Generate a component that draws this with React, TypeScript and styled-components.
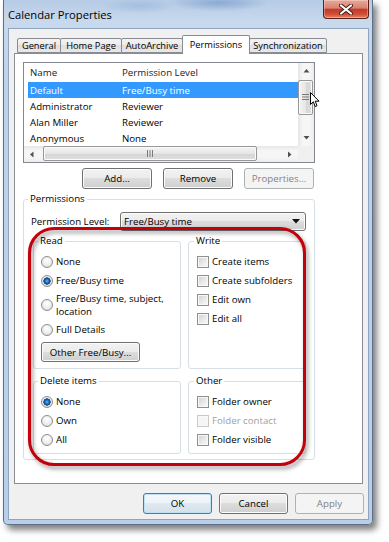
import React from 'react';
import styled, { createGlobalStyle } from 'styled-components';

const GlobalStyle = createGlobalStyle`
  html, body {
    margin: 0;
    background: #fff;
  }
  body {
    font-family: 'Open Sans', 'Noto Sans', sans-serif;
    font-size: 9.7px;
    color: #000;
  }
  * {
    box-sizing: border-box;
  }
`;

const Page = styled.div`
  height: 542px;
  padding-left: 3px;
`;

const Window = styled.div`
  width: 370px;
  height: 525px;
  display: flex;
  flex-direction: column;
  padding: 0 3px 4px 4px;
  border: 1px solid #5d7089;
  border-top: none;
  border-radius: 0 0 5px 5px;
  background:
    radial-gradient(ellipse 70px 12px at 215px 3px, rgba(92, 134, 192, 0.5), transparent 70%),
    radial-gradient(ellipse 55px 10px at 135px 6px, rgba(120, 160, 212, 0.35), transparent 70%),
    linear-gradient(180deg, #b6cbe5 0px, #c8d9ed 22px, #bed2ea 80px, #b9cee8 100%);
  box-shadow: 4px 5px 6px rgba(0, 0, 0, 0.5);
`;

const TitleBar = styled.div`
  height: 28px;
  flex: none;
  display: flex;
  justify-content: space-between;
  align-items: flex-start;
`;

const Title = styled.div`
  margin-top: 7px;
  font-size: 11.2px;
  line-height: 16px;
  color: #000;
`;

const CloseButton = styled.div`
  width: 46px;
  height: 19px;
  display: flex;
  align-items: center;
  justify-content: center;
  border: 1px solid #5f1f17;
  border-top: none;
  border-radius: 0 0 4px 4px;
  background: linear-gradient(#e9a899 0%, #d98270 45%, #c13a2a 52%, #cf4d36 78%, #e2866a 100%);
  box-shadow: inset 0 0 0 1px rgba(255, 255, 255, 0.3);
`;

const Client = styled.div`
  flex: 1;
  display: flex;
  flex-direction: column;
  padding-top: 6px;
  background: #f0f0f0;
  border: 1px solid #8fa4bd;
`;

const TabStrip = styled.div`
  height: 19px;
  margin: 0 0 -1px 8px;
  display: flex;
  align-items: flex-end;
  position: relative;
  z-index: 1;
`;

const Tab = styled.div<{ $w: number; $active?: boolean }>`
  width: ${p => p.$w}px;
  height: ${p => (p.$active ? 19 : 15)}px;
  margin-bottom: ${p => (p.$active ? 0 : 1)}px;
  margin-right: -1px;
  display: flex;
  align-items: center;
  justify-content: center;
  padding-bottom: ${p => (p.$active ? 2 : 0)}px;
  border: 1px solid #898c95;
  border-bottom: ${p => (p.$active ? 'none' : '1px solid #898c95')};
  border-radius: 2px 2px 0 0;
  background: ${p => (p.$active ? '#fff' : 'linear-gradient(#f3f3f3, #ebebeb 50%, #dfdfdf 50%, #e9e9e9)')};
  font-size: 9.3px;
  line-height: 13px;
  white-space: nowrap;
  position: relative;
  z-index: ${p => (p.$active ? 2 : 1)};
`;

const Panel = styled.div`
  margin-left: 5px;
  width: 349px;
  height: 431px;
  padding: 8px 0 0 8px;
  background: #fff;
  border: 1px solid #898c95;
  position: relative;
`;

const ListView = styled.div`
  width: 292px;
  height: 101px;
  display: grid;
  grid-template-columns: 1fr 16px;
  grid-template-rows: 1fr 16px;
  border: 1px solid #828790;
`;

const ListBody = styled.div`
  display: flex;
  flex-direction: column;
`;

const ListHeader = styled.div`
  height: 19px;
  padding-left: 6px;
  display: grid;
  grid-template-columns: 92px 1fr;
  align-items: center;
  color: #1b1b1b;
`;

const ListRow = styled.div<{ $selected?: boolean }>`
  height: 16px;
  margin-left: 4px;
  padding-left: 2px;
  display: grid;
  grid-template-columns: 92px 1fr;
  align-items: center;
  background: ${p => (p.$selected ? '#3399ff' : 'transparent')};
  color: ${p => (p.$selected ? '#fff' : '#000')};
`;

const VScroll = styled.div`
  display: flex;
  flex-direction: column;
  background: linear-gradient(90deg, #e6e6e6, #f6f6f6 30%, #f6f6f6 70%, #ececec);
`;

const HScroll = styled.div`
  display: flex;
  background: linear-gradient(180deg, #e6e6e6, #f6f6f6 30%, #f6f6f6 70%, #ececec);
`;

const ScrollArrow = styled.div`
  flex: none;
  width: 16px;
  height: 16px;
  display: flex;
  align-items: center;
  justify-content: center;
`;

const ScrollGap = styled.div`
  flex: 1;
`;

const Thumb = styled.div<{ $horizontal?: boolean }>`
  flex: none;
  width: ${p => (p.$horizontal ? '214px' : '15px')};
  height: ${p => (p.$horizontal ? '15px' : '35px')};
  margin: ${p => (p.$horizontal ? '0 0 0 3px' : '1px 0 0 0')};
  display: flex;
  align-items: center;
  justify-content: center;
  border: 1px solid #979797;
  border-radius: 2px;
  background: ${p =>
    p.$horizontal
      ? 'linear-gradient(180deg, #f4f4f4, #e6e6e6 50%, #d6d6d6 51%, #dedede)'
      : 'linear-gradient(90deg, #f4f4f4, #e6e6e6 50%, #d6d6d6 51%, #dedede)'};
  box-shadow: inset 0 0 0 1px #fbfbfb;
`;

const Corner = styled.div`
  background: #f0f0f0;
`;

const ActionRow = styled.div`
  width: 292px;
  margin-top: 5px;
  padding-right: 1px;
  display: flex;
  justify-content: flex-end;
  gap: 11px;
`;

const Button = styled.button<{ $w: number; $h?: number; $primary?: boolean }>`
  width: ${p => p.$w}px;
  height: ${p => p.$h || 21}px;
  flex: none;
  padding: 0;
  font: inherit;
  color: #000;
  border: 1px solid ${p => (p.$primary ? '#3c7fb1' : '#707070')};
  border-radius: 3px;
  background: ${p =>
    p.$primary
      ? 'linear-gradient(#f4f8fb 0%, #edf3f8 49%, #e0e9f1 50%, #d5e0ea 100%)'
      : 'linear-gradient(#f2f2f2 0%, #ebebeb 49%, #dddddd 50%, #cfcfcf 100%)'};
  box-shadow: inset 0 0 0 1px ${p => (p.$primary ? '#bfe1f7' : '#fcfcfc')};

  &:disabled {
    border-color: #adb2b5;
    background: #f4f4f4;
    color: #838383;
    box-shadow: none;
  }
`;

const GroupBox = styled.fieldset<{ $pad: string }>`
  margin: 0;
  min-width: 0;
  padding: ${p => p.$pad};
  display: flex;
  flex-direction: column;
  border: 1px solid #d5dfe5;
  border-radius: 3px;
`;

const GroupTitle = styled.legend<{ $shift: number }>`
  margin-left: ${p => p.$shift}px;
  padding: 0 2px;
  line-height: 14px;
`;

const PermissionsBox = styled(GroupBox)`
  width: 292px;
  margin-top: 3px;
`;

const LevelRow = styled.div`
  margin-top: 6px;
  display: flex;
  align-items: center;
  justify-content: space-between;
`;

const LevelLabel = styled.span`
  margin-left: -2px;
`;

const ComboBox = styled.div`
  width: 186px;
  height: 19px;
  padding: 0 5px 0 3px;
  display: flex;
  align-items: center;
  justify-content: space-between;
  border: 1px solid #707070;
  border-radius: 3px;
  background: linear-gradient(#f2f2f2 0%, #ebebeb 49%, #dddddd 50%, #cfcfcf 100%);
  box-shadow: inset 0 0 0 1px #fcfcfc;
`;

const GroupGrid = styled.div`
  margin-top: 3px;
  display: grid;
  grid-template-columns: 148px 1fr;
  grid-template-rows: 135px 80px;
  column-gap: 7px;
  row-gap: 5px;
`;

const Options = styled.div`
  padding-top: 7px;
  display: flex;
  flex-direction: column;
  align-items: flex-start;
  gap: 6px;
`;

const Option = styled.label<{ $disabled?: boolean }>`
  display: flex;
  align-items: center;
  gap: 3px;
  line-height: 13px;
  color: ${p => (p.$disabled ? '#a0a0a0' : '#000')};
`;

const TwoLines = styled.span`
  margin: -1px 0;
  line-height: 13px;
`;

const Radio = styled.span<{ $on?: boolean }>`
  flex: none;
  width: 12px;
  height: 12px;
  border-radius: 50%;
  border: 1px solid #8d8d8d;
  background: ${p =>
    p.$on
      ? 'radial-gradient(circle at 50% 50%, #6ab6f0 0, #2270c0 1.8px, #0b3f82 3.4px, transparent 3.9px), radial-gradient(circle at 50% 35%, #fff 0, #ebebeb 55%, #d0d0d0 100%)'
      : 'radial-gradient(circle at 50% 35%, #fff 0, #ededed 55%, #d2d2d2 100%)'};
`;

const Check = styled.span<{ $disabled?: boolean }>`
  flex: none;
  width: 12px;
  height: 12px;
  border: 1px solid ${p => (p.$disabled ? '#c9c9c9' : '#8e8f8f')};
  background: ${p =>
    p.$disabled ? '#f5f5f5' : 'linear-gradient(135deg, #cdd0d4 0%, #e8eaec 55%, #fbfbfb 100%)'};
  box-shadow: inset 0 0 0 1px #f8f8f8;
`;

const Highlight = styled.div`
  position: absolute;
  left: 13px;
  top: 173px;
  width: 278px;
  height: 239px;
  border: 3px solid #c4000c;
  border-radius: 26px;
  filter: drop-shadow(2px 3px 2px rgba(0, 0, 0, 0.4));
  pointer-events: none;
`;

const Pointer = styled.svg`
  position: absolute;
  left: 295px;
  top: 38px;
`;

const ButtonBar = styled.div`
  margin-top: 9px;
  padding-right: 4px;
  display: flex;
  justify-content: flex-end;
  gap: 7px;
`;

const Arrow = ({ dir }: { dir: 'up' | 'down' | 'left' | 'right' }) => {
  const paths = {
    up: 'M0.5 4.5 L3.5 1 L6.5 4.5 Z',
    down: 'M0.5 1 L3.5 4.5 L6.5 1 Z',
    left: 'M4.5 0.5 L1 3.5 L4.5 6.5 Z',
    right: 'M1 0.5 L4.5 3.5 L1 6.5 Z',
  };
  const horizontal = dir === 'left' || dir === 'right';
  return (
    <svg width={horizontal ? 6 : 7} height={horizontal ? 7 : 6} viewBox={horizontal ? '0 0 6 7' : '0 0 7 6'}>
      <path d={paths[dir]} fill="#505050" />
    </svg>
  );
};

const Grip = ({ horizontal }: { horizontal?: boolean }) =>
  horizontal ? (
    <svg width="7" height="7" viewBox="0 0 7 7">
      {[0.5, 3, 5.5].map(x => (
        <line key={x} x1={x} y1="0" x2={x} y2="7" stroke="#7a7a7a" strokeWidth="1" />
      ))}
    </svg>
  ) : (
    <svg width="7" height="7" viewBox="0 0 7 7">
      {[0.5, 3, 5.5].map(y => (
        <line key={y} x1="0" y1={y} x2="7" y2={y} stroke="#7a7a7a" strokeWidth="1" />
      ))}
    </svg>
  );

const tabs = [
  { label: 'General', w: 44 },
  { label: 'Home Page', w: 62 },
  { label: 'AutoArchive', w: 62 },
  { label: 'Permissions', w: 68, active: true },
  { label: 'Synchronization', w: 78 },
];

const people = [
  { name: 'Default', level: 'Free/Busy time', selected: true },
  { name: 'Administrator', level: 'Reviewer' },
  { name: 'Alan Miller', level: 'Reviewer' },
  { name: 'Anonymous', level: 'None' },
];

const writeOptions = ['Create items', 'Create subfolders', 'Edit own', 'Edit all'];

const deleteOptions = [
  { label: 'None', on: true },
  { label: 'Own' },
  { label: 'All' },
];

const otherOptions = [
  { label: 'Folder owner' },
  { label: 'Folder contact', disabled: true },
  { label: 'Folder visible' },
];

function App() {
  return (
    <Page>
      <GlobalStyle />
      <Window>
        <TitleBar>
          <Title>Calendar Properties</Title>
          <CloseButton>
            <svg width="14" height="11" viewBox="0 0 14 11">
              <path d="M2 1.5 L12 9.5 M12 1.5 L2 9.5" stroke="#4a1a14" strokeWidth="4" strokeLinecap="round" />
              <path d="M2 1.5 L12 9.5 M12 1.5 L2 9.5" stroke="#fff" strokeWidth="2.2" strokeLinecap="round" />
            </svg>
          </CloseButton>
        </TitleBar>
        <Client>
          <TabStrip>
            {tabs.map(t => (
              <Tab key={t.label} $w={t.w} $active={t.active}>
                {t.label}
              </Tab>
            ))}
          </TabStrip>
          <Panel>
            <ListView>
              <ListBody>
                <ListHeader>
                  <span>Name</span>
                  <span>Permission Level</span>
                </ListHeader>
                {people.map(p => (
                  <ListRow key={p.name} $selected={p.selected}>
                    <span>{p.name}</span>
                    <span>{p.level}</span>
                  </ListRow>
                ))}
              </ListBody>
              <VScroll>
                <ScrollArrow>
                  <Arrow dir="up" />
                </ScrollArrow>
                <Thumb>
                  <Grip />
                </Thumb>
                <ScrollGap />
                <ScrollArrow>
                  <Arrow dir="down" />
                </ScrollArrow>
              </VScroll>
              <HScroll>
                <ScrollArrow>
                  <Arrow dir="left" />
                </ScrollArrow>
                <Thumb $horizontal>
                  <Grip horizontal />
                </Thumb>
                <ScrollGap />
                <ScrollArrow>
                  <Arrow dir="right" />
                </ScrollArrow>
              </HScroll>
              <Corner />
            </ListView>

            <ActionRow>
              <Button $w={70}>Add...</Button>
              <Button $w={70}>Remove</Button>
              <Button $w={70} disabled>
                Properties...
              </Button>
            </ActionRow>

            <PermissionsBox $pad="0 8px 5px 9px">
              <GroupTitle $shift={-5}>Permissions</GroupTitle>
              <LevelRow>
                <LevelLabel>Permission Level:</LevelLabel>
                <ComboBox>
                  <span>Free/Busy time</span>
                  <svg width="8" height="5" viewBox="0 0 8 5">
                    <path d="M0 0 H8 L4 4.5 Z" fill="#111" />
                  </svg>
                </ComboBox>
              </LevelRow>
              <GroupGrid>
                <GroupBox $pad="0 6px 4px 7px">
                  <GroupTitle $shift={-3}>Read</GroupTitle>
                  <Options>
                    <Option>
                      <Radio />
                      None
                    </Option>
                    <Option>
                      <Radio $on />
                      Free/Busy time
                    </Option>
                    <Option>
                      <Radio />
                      <TwoLines>
                        Free/Busy time, subject,
                        <br />
                        location
                      </TwoLines>
                    </Option>
                    <Option>
                      <Radio />
                      Full Details
                    </Option>
                    <Button $w={99} $h={20}>
                      Other Free/Busy...
                    </Button>
                  </Options>
                </GroupBox>
                <GroupBox $pad="0 6px 4px 8px">
                  <GroupTitle $shift={-3}>Write</GroupTitle>
                  <Options>
                    {writeOptions.map(o => (
                      <Option key={o}>
                        <Check />
                        {o}
                      </Option>
                    ))}
                  </Options>
                </GroupBox>
                <GroupBox $pad="0 6px 4px 7px">
                  <GroupTitle $shift={-3}>Delete items</GroupTitle>
                  <Options>
                    {deleteOptions.map(o => (
                      <Option key={o.label}>
                        <Radio $on={o.on} />
                        {o.label}
                      </Option>
                    ))}
                  </Options>
                </GroupBox>
                <GroupBox $pad="0 6px 4px 8px">
                  <GroupTitle $shift={-3}>Other</GroupTitle>
                  <Options>
                    {otherOptions.map(o => (
                      <Option key={o.label} $disabled={o.disabled}>
                        <Check $disabled={o.disabled} />
                        {o.label}
                      </Option>
                    ))}
                  </Options>
                </GroupBox>
              </GroupGrid>
            </PermissionsBox>

            <Highlight />
            <Pointer width="10" height="16" viewBox="0 0 10 16">
              <path d="M0.5 0.5 L0.5 12.5 L3.3 9.8 L5.2 14.5 L7 13.7 L5.2 9.2 L9 9.2 Z" fill="#fff" stroke="#000" strokeWidth="1" strokeLinejoin="round" />
            </Pointer>
          </Panel>
          <ButtonBar>
            <Button $w={69} $primary>
              OK
            </Button>
            <Button $w={69}>Cancel</Button>
            <Button $w={69} disabled>
              Apply
            </Button>
          </ButtonBar>
        </Client>
      </Window>
    </Page>
  );
}

export default App;
